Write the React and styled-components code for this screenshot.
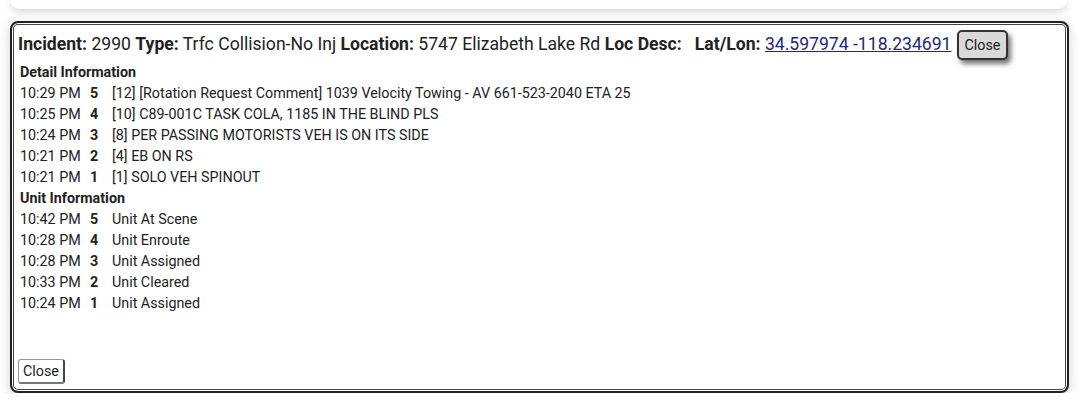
import React from 'react';
import styled, { createGlobalStyle } from 'styled-components';

const GlobalStyle = createGlobalStyle`
    body {
        margin: 0;
        background: #fff;
        font-family: Roboto, "Liberation Sans", sans-serif;
        color: #222;
    }
`

const Page = styled.div`
    padding: 0 10px;
`

const TopCard = styled.div`
    height: 9px;
    margin-right: 2px;
    background: #fff;
    border-radius: 0 0 10px 10px;
    box-shadow: 0 2px 8px rgba(0, 0, 0, 0.2);
`

const Dialog = styled.div`
    box-sizing: border-box;
    display: flex;
    flex-direction: column;
    margin-top: 12px;
    height: 372px;
    padding: 6px 6px 7px 6px;
    border: 2px solid #222;
    border-radius: 8px;
    background: #fff;
    box-shadow: inset 0 0 0 1px #fff, inset 0 0 0 2px #444, 0 4px 12px rgba(0, 0, 0, 0.18);
`

const Header = styled.div`
    font-size: 17.6px;
    line-height: 30px;
    margin-bottom: 2px;
    white-space: nowrap;
    b { font-weight: 700; }
`

const Link = styled.a`
    color: #1d2a7c;
    text-decoration: underline;
`

const HeaderClose = styled.button`
    margin-left: 5px;
    padding: 0 6px;
    height: 30px;
    font-family: Roboto, "Liberation Sans", sans-serif;
    font-size: 14.3px;
    color: #222;
    background: #d9d9d9;
    border: 2px solid #333;
    border-radius: 5px;
    box-shadow: 3px 4px 5px rgba(0, 0, 0, 0.55);
    vertical-align: baseline;
`

const SectionTitle = styled.div`
    font-size: 14.3px;
    font-weight: 700;
    line-height: 21px;
    padding-left: 2px;
`

const Rows = styled.div`
    display: grid;
    grid-template-columns: 70px 22px 1fr;
    font-size: 14.3px;
    line-height: 21px;
    padding-left: 2px;
`

const Num = styled.span`
    font-weight: 700;
`

const Footer = styled.div`
    margin-top: auto;
`

const FooterClose = styled.button`
    height: 25px;
    padding: 0 4px;
    font-family: Roboto, "Liberation Sans", sans-serif;
    font-size: 14.3px;
    color: #222;
    background: #fff;
    border: 1px solid #999;
    border-right: 2px solid #444;
    border-bottom: 2px solid #777;
    border-radius: 3px;
`

const details = [
    ['10:29 PM', '5', '[12] [Rotation Request Comment] 1039 Velocity Towing - AV 661-523-2040 ETA 25'],
    ['10:25 PM', '4', '[10] C89-001C TASK COLA, 1185 IN THE BLIND PLS'],
    ['10:24 PM', '3', '[8] PER PASSING MOTORISTS VEH IS ON ITS SIDE'],
    ['10:21 PM', '2', '[4] EB ON RS'],
    ['10:21 PM', '1', '[1] SOLO VEH SPINOUT'],
];

const units = [
    ['10:42 PM', '5', 'Unit At Scene'],
    ['10:28 PM', '4', 'Unit Enroute'],
    ['10:28 PM', '3', 'Unit Assigned'],
    ['10:33 PM', '2', 'Unit Cleared'],
    ['10:24 PM', '1', 'Unit Assigned'],
];

const RowList = ({ items }) => (
    <Rows>
        {items.map(([time, num, text], i) => (
            <React.Fragment key={i}>
                <span>{time}</span>
                <Num>{num}</Num>
                <span>{text}</span>
            </React.Fragment>
        ))}
    </Rows>
);

const App = () => {
    return (
        <Page>
            <GlobalStyle />
            <TopCard />
            <Dialog>
                <Header>
                    <b>Incident:</b> 2990 <b>Type:</b> Trfc Collision-No Inj <b>Location:</b> 5747 Elizabeth Lake Rd <b>Loc Desc:</b>&nbsp;&nbsp; <b>Lat/Lon:</b> <Link href="#">34.597974 -118.234691</Link>
                    <HeaderClose>Close</HeaderClose>
                </Header>
                <SectionTitle>Detail Information</SectionTitle>
                <RowList items={details} />
                <SectionTitle>Unit Information</SectionTitle>
                <RowList items={units} />
                <Footer>
                    <FooterClose>Close</FooterClose>
                </Footer>
            </Dialog>
        </Page>
    );
}

export default App;
